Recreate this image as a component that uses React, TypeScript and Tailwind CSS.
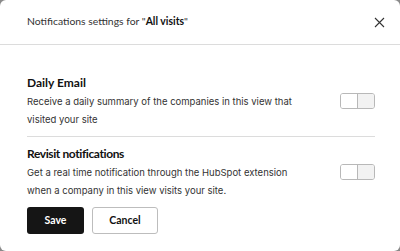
import React from "react";

function Toggle() {
  return (
    <div className="flex h-[16px] w-[35px] overflow-hidden rounded-[3px] border border-[#b8b8b8]">
      <div className="w-1/2 border-r border-[#b8b8b8] bg-white" />
      <div className="w-1/2 bg-[#f2f2f2]" />
    </div>
  );
}

const lato = { fontFamily: "Lato, 'Noto Sans', sans-serif" };

export default function App() {
  return (
    <div className="h-[251px] w-[400px] bg-[#8a8a8a]" style={{ fontFamily: "Inter, 'Noto Sans', sans-serif" }}>
      <div className="flex h-full w-full flex-col rounded-[6px] bg-white text-[#1f1f1f]">
        <div className="flex h-[45px] items-center justify-between border-b border-[#dcdcdc] pl-[27px] pr-[15px]">
          <div className="text-[10.4px] text-[#333]" style={lato}>
            Notifications settings for "<span className="font-bold text-[#111]">All visits</span>"
          </div>
          <svg width="11" height="11" viewBox="0 0 11 11">
            <path d="M1 1L10 10M10 1L1 10" stroke="#333" strokeWidth="1.1" />
          </svg>
        </div>
        <div className="flex flex-col pl-[27px] pr-[25px] pt-[28px]">
          <div className="flex items-center justify-between border-b border-[#dcdcdc] pb-[7px]">
            <div>
              <div className="text-[12px] font-bold leading-[20px] text-[#111]" style={lato}>Daily Email</div>
              <div className="text-[9.5px] leading-[18px] text-[#333]">
                Receive a daily summary of the companies in this view that
                <br />
                visited your site
              </div>
            </div>
            <Toggle />
          </div>
          <div className="flex items-center justify-between pt-[7px]">
            <div>
              <div className="text-[12px] font-bold leading-[20px] tracking-[-0.4px] text-[#111]" style={lato}>Revisit notifications</div>
              <div className="text-[9.5px] leading-[18px] text-[#333]">
                Get a real time notification through the HubSpot extension
                <br />
                when a company in this view visits your site.
              </div>
            </div>
            <Toggle />
          </div>
          <div className="mt-[7px] flex gap-[8px]" style={lato}>
            <button className="h-[27px] w-[57px] rounded-[3px] bg-[#151515] text-[10.5px] font-bold text-white">Save</button>
            <button className="h-[27px] w-[66px] rounded-[3px] border border-[#bdbdbd] bg-white text-[10.5px] font-bold text-[#111]">Cancel</button>
          </div>
        </div>
      </div>
    </div>
  );
}
